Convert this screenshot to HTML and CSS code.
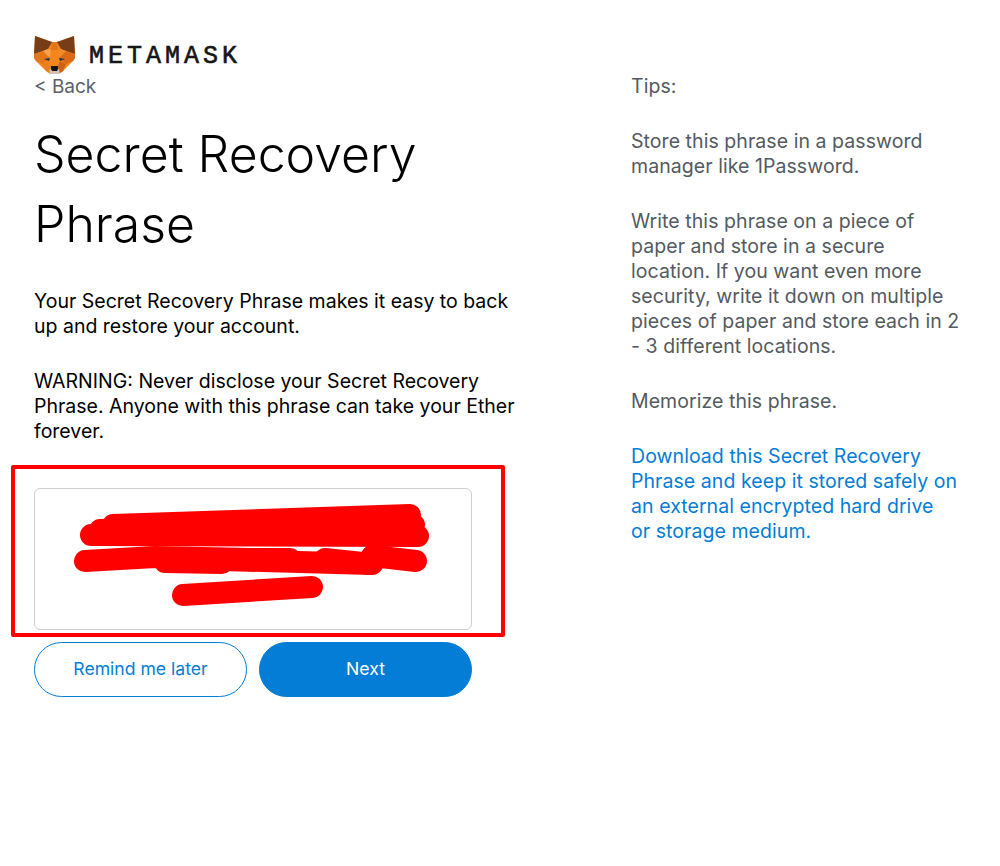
FILE: index.html
```html
<!DOCTYPE html>
<html lang="en">
<head>
<meta charset="utf-8">
<title>MetaMask</title>
<link rel="stylesheet" href="styles.css">
</head>
<body>
<div class="page">
  <header class="brand">
    <svg class="fox" width="41" height="38" viewBox="0 0 41 38">
      <polygon points="1,0 18,6 23,6 40,0 41,22 39,25 29,35 24,38 17,38 12,35 2,25 0,22" fill="#f6851b"/>
      <polygon points="1,0 18,6 14,13 9,15 0,18" fill="#763d16"/>
      <polygon points="40,0 23,6 27,13 32,15 41,18" fill="#763d16"/>
      <polygon points="18,6 23,6 24,14 17,14" fill="#e2761b"/>
      <polygon points="0,18 9,15 16,22 9,28 2,25 0,22" fill="#e4761b"/>
      <polygon points="41,18 32,15 25,22 32,28 39,25 41,22" fill="#d96a17"/>
      <polygon points="9,15 14,13 17,14 16,22" fill="#f8a04a"/>
      <polygon points="32,15 27,13 24,14 25,22" fill="#f08a2a"/>
      <polygon points="10,23 16,22 15,25" fill="#233447"/>
      <polygon points="31,23 25,22 26,25" fill="#233447"/>
      <polygon points="9,28 15,25 17,30 16,38 12,35" fill="#e8821e"/>
      <polygon points="32,28 26,25 24,30 25,38 29,35" fill="#cd6116"/>
      <polygon points="15,38 26,38 25,33 16,33" fill="#d7c1b3"/>
      <polygon points="17,30 24,30 24,33 23,35 18,35 17,33" fill="#161616"/>
    </svg>
    <span class="wordmark">METAMASK</span>
  </header>
  <main class="layout">
    <section class="main">
      <a class="back">&lt; Back</a>
      <h1>Secret Recovery Phrase</h1>
      <p class="copy">Your Secret Recovery Phrase makes it easy to back up and restore your account.</p>
      <p class="copy warning">WARNING: Never disclose your Secret Recovery Phrase. Anyone with this phrase can take your Ether forever.</p>
      <div class="highlight">
        <div class="phrase"></div>
        <svg class="scribble" width="494" height="172" viewBox="11 465 494 172">
          <g fill="none" stroke="#ff0000" stroke-width="22" stroke-linecap="round" stroke-linejoin="round">
            <path d="M113 525 L410 515"/>
            <path d="M100 530 L414 525"/>
            <path d="M91 535 L418 536"/>
            <path d="M120 530 L405 530"/>
            <path d="M85 561 L155 557 L250 559 L290 559"/>
            <path d="M165 562 L222 563 M222 560 L372 564"/>
            <path d="M325 559 L372 564 M372 556 L416 561"/>
            <path d="M183 595 L312 587"/>
          </g>
        </svg>
      </div>
      <div class="actions">
        <button class="btn secondary">Remind me later</button>
        <button class="btn primary">Next</button>
      </div>
    </section>
    <aside class="tips">
      <p>Tips:</p>
      <p>Store this phrase in a password manager like 1Password.</p>
      <p>Write this phrase on a piece of paper and store in a secure location. If you want even more security, write it down on multiple pieces of paper and store each in 2 - 3 different locations.</p>
      <p>Memorize this phrase.</p>
      <p class="link">Download this Secret Recovery Phrase and keep it stored safely on an external encrypted hard drive<br>or storage medium.</p>
    </aside>
  </main>
</div>
</body>
</html>
```
FILE: styles.css
```css
* { box-sizing: border-box; }
html, body { margin: 0; background: #fff; }
body { font-family: "Inter", "Liberation Sans", sans-serif; color: #000; }
.page { width: 1000px; height: 866px; padding: 35px 0 0 34px; overflow: hidden; }
.brand { display: flex; align-items: center; height: 39px; gap: 14px; }
.wordmark { padding-top: 3px; font-family: "Liberation Mono", monospace; font-size: 25px; letter-spacing: 4px; color: #161616; -webkit-text-stroke: .6px #161616; }
.layout { display: flex; }
.main { width: 497px; flex: none; }
.back { display: block; font-size: 19px; line-height: 25px; color: #5b6168; margin-bottom: 20px; }
h1 { margin: 0 0 30px; font-size: 50px; line-height: 70px; font-weight: 300; width: 440px; }
.copy { margin: 0 0 30px; font-size: 19.5px; line-height: 25px; width: 490px; }
.warning { margin-bottom: 21px; }
.highlight { position: relative; margin: 0 0 5px -23px; width: 494px; height: 172px; border: 4px solid #ff0000; border-radius: 2px; padding: 19px 0 0 19px; }
.phrase { width: 438px; height: 142px; border: 1px solid #cfcfcf; border-radius: 6px; }
.scribble { position: absolute; left: -4px; top: -4px; }
.actions { display: flex; gap: 12px; width: 438px; }
.btn { flex: 1; height: 55px; padding: 0 0 2px; border-radius: 28px; font: inherit; font-size: 17.6px; }
.secondary { background: #fff; border: 1px solid #037dd6; color: #037dd6; }
.primary { background: #037dd6; border: 1px solid #037dd6; color: #fff; }
.tips { width: 333px; margin-left: 100px; font-size: 19.5px; line-height: 25px; letter-spacing: .06px; color: #535a61; }
.tips p { margin: 0 0 30px; }
.tips .link { color: #037dd6; }
```
